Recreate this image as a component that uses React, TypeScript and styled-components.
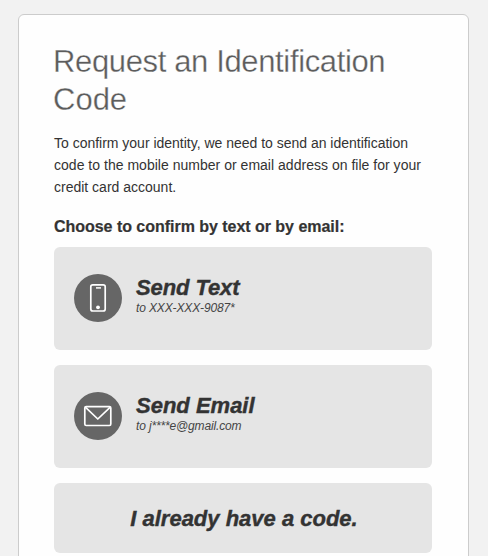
import React from "react";
import styled, { createGlobalStyle } from "styled-components";

const GlobalStyle = createGlobalStyle`
  html, body { margin: 0; padding: 0; background: #f2f2f2; }
  body { height: 556px; overflow: hidden; font-family: "Liberation Sans", Arial, sans-serif; color: #333; }
  *, *::before, *::after { box-sizing: border-box; }
`;

const Page = styled.main`
  height: 556px;
  padding: 14px 19px 0 18px;
  overflow: hidden;
  background: #f2f2f2;
`;

const Card = styled.section`
  height: 600px;
  padding: 28px 36px 0 35px;
  border: 1px solid #ccc;
  border-radius: 6px;
  background: #fefefe;
`;

const Title = styled.h1`
  margin: 0 0 0 -1px;
  font-size: 31px;
  font-weight: 400;
  line-height: 38px;
  color: #5c5c5c;
  -webkit-text-stroke: 0.3px #fefefe;
`;

const Intro = styled.p`
  margin: 13px 0 0;
  font-size: 14px;
  line-height: 22px;
`;

const Line = styled.span<{ $tracking?: number }>`
  display: block;
  white-space: nowrap;
  letter-spacing: ${({ $tracking = 0 }) => $tracking}px;
`;

const Prompt = styled.h2`
  margin: 18px 0 0;
  font-size: 16px;
  line-height: 22px;
  font-weight: 700;
  white-space: nowrap;
  letter-spacing: -0.03px;
  -webkit-text-stroke: 0.2px currentColor;
`;

const Options = styled.div`
  display: flex;
  flex-direction: column;
  gap: 15px;
  width: 378px;
  margin-top: 9px;
`;

const Option = styled.button<{ $compact?: boolean }>`
  display: flex;
  align-items: ${({ $compact }) => ($compact ? "center" : "flex-start")};
  justify-content: ${({ $compact }) => ($compact ? "center" : "flex-start")};
  gap: 14px;
  height: ${({ $compact }) => ($compact ? 70 : 103)}px;
  padding: ${({ $compact }) => ($compact ? "2px 0 0 2px" : "27px 20px 0")};
  border: 0;
  border-radius: 6px;
  background: #e5e5e5;
  color: #333;
  font: inherit;
  text-align: left;
  cursor: pointer;
`;

const IconDisc = styled.span`
  display: flex;
  flex: none;
  width: 48px;
  height: 48px;
  border-radius: 50%;
  background: #666;
`;

const OptionText = styled.span`
  display: flex;
  flex-direction: column;
  padding-top: 1px;
`;

const OptionTitle = styled.span<{ $tracking?: number }>`
  font-size: 22px;
  line-height: 26px;
  font-weight: 700;
  font-style: italic;
  white-space: nowrap;
  letter-spacing: ${({ $tracking = 0 }) => $tracking}px;
  -webkit-text-stroke: 0.4px currentColor;
`;

const OptionDetail = styled.span<{ $tracking?: number }>`
  margin-top: -1px;
  font-size: 12px;
  line-height: 16px;
  font-style: italic;
  color: #444;
  white-space: nowrap;
  letter-spacing: ${({ $tracking = 0 }) => $tracking}px;
`;

const PhoneIcon = () => (
  <svg width="48" height="48" viewBox="0 0 48 48" fill="none" stroke="#fff" aria-hidden="true">
    <rect x="16.8" y="10.8" width="14.4" height="26.2" rx="2" strokeWidth="1.7" />
    <path d="M22 13.9h5" strokeWidth="1.5" />
    <circle cx="24" cy="33.3" r="1.9" fill="#fff" stroke="none" />
  </svg>
);

const MailIcon = () => (
  <svg width="48" height="48" viewBox="0 0 48 48" fill="none" stroke="#fff" strokeWidth="1.7" strokeLinejoin="round" aria-hidden="true">
    <rect x="10.8" y="14.6" width="26" height="18.9" rx="1.4" />
    <path d="M11.3 15.2L23.8 27L36.3 15.2" />
  </svg>
);

export default function App() {
  return (
    <>
      <GlobalStyle />
      <Page>
        <Card>
          <Title>
            <Line $tracking={-0.36}>Request an Identification</Line>
            <Line>Code</Line>
          </Title>
          <Intro>
            <Line $tracking={-0.01}>To confirm your identity, we need to send an identification</Line>
            <Line $tracking={0.02}>code to the mobile number or email address on file for your</Line>
            <Line>credit card account.</Line>
          </Intro>
          <Prompt>Choose to confirm by text or by email:</Prompt>
          <Options>
            <Option type="button">
              <IconDisc><PhoneIcon /></IconDisc>
              <OptionText>
                <OptionTitle $tracking={-0.1}>Send Text</OptionTitle>
                <OptionDetail $tracking={-0.13}>to XXX-XXX-9087*</OptionDetail>
              </OptionText>
            </Option>
            <Option type="button">
              <IconDisc><MailIcon /></IconDisc>
              <OptionText>
                <OptionTitle>Send Email</OptionTitle>
                <OptionDetail $tracking={-0.15}>to j****e@gmail.com</OptionDetail>
              </OptionText>
            </Option>
            <Option type="button" $compact>
              <OptionTitle>I already have a code.</OptionTitle>
            </Option>
          </Options>
        </Card>
      </Page>
    </>
  );
}
